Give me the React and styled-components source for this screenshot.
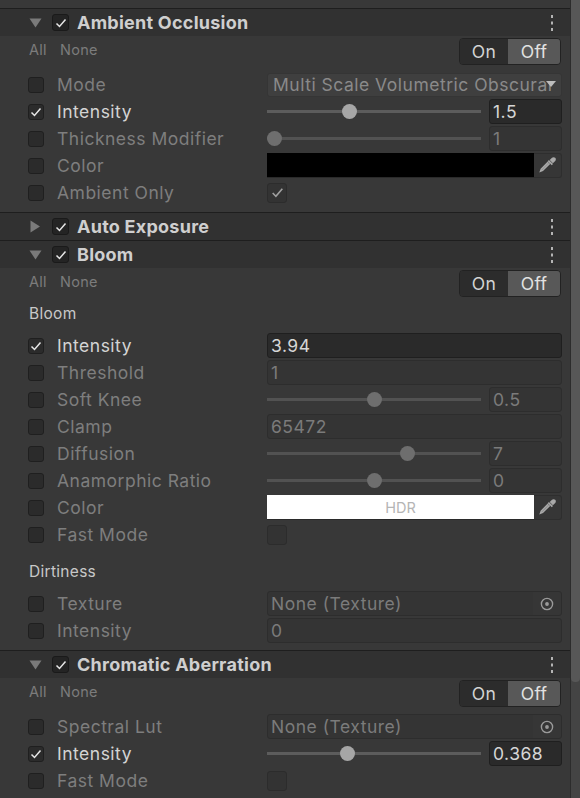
import React from "react";
import styled, { createGlobalStyle } from "styled-components";

const GlobalStyle = createGlobalStyle`
  body {
    margin: 0;
    background: #383838;
    font-family: Inter, "Noto Sans", sans-serif;
  }
`;

const Inspector = styled.div`
  display: flex;
  width: 580px;
  height: 798px;
  overflow: hidden;
  background: #383838;
`;

const Column = styled.div`
  flex: 1;
  min-width: 0;
`;

const TopStrip = styled.div`
  height: 8px;
`;

const Scrollbar = styled.div`
  width: 9px;
  border-left: 1px solid #2c2c2c;
  background: #444444;
`;

const Thumb = styled.div`
  height: 682px;
  background: #575757;
  border-radius: 0 0 4px 4px;
`;

const Header = styled.div`
  display: flex;
  align-items: center;
  height: 27px;
  border-top: 1px solid #1e1e1e;
  background: #313131;
  padding-left: 29px;
  padding-right: 16px;
`;

const Arrow = styled.svg`
  width: 13px;
  height: 13px;
  flex: none;
`;

const HeaderBox = styled.div`
  width: 15px;
  height: 15px;
  margin-left: 10px;
  margin-right: 8px;
  border: 1px solid #1a1a1a;
  border-radius: 3px;
  background: #242424;
  display: flex;
  align-items: center;
  justify-content: center;
`;

const Title = styled.span`
  font-size: 18px;
  font-weight: 700;
  color: #cfcfcf;
  letter-spacing: 0.25px;
`;

const Kebab = styled.svg`
  margin-left: auto;
  width: 4px;
  height: 16px;
`;

const Body = styled.div`
  padding: 3px 0 6px;
`;

const Toolbar = styled.div`
  display: flex;
  align-items: center;
  height: 25px;
  padding-left: 29px;
  padding-right: 9px;
  margin-bottom: 7px;
`;

const Link = styled.span`
  font-size: 14.5px;
  letter-spacing: 0.3px;
  color: #7c7c7c;
  margin-right: 13px;
  margin-bottom: 5px;
`;

const Segmented = styled.div`
  margin-left: auto;
  display: flex;
  height: 25px;
  border: 1px solid #222222;
  border-radius: 4px;
  overflow: hidden;
`;

const Segment = styled.div`
  display: flex;
  align-items: center;
  justify-content: center;
  width: ${(p) => p.$w}px;
  font-size: 17.5px;
  letter-spacing: 0.3px;
  color: ${(p) => (p.$active ? "#e2e2e2" : "#d4d4d4")};
  background: ${(p) => (p.$active ? "#585858" : "#2c2c2c")};
`;

const SectionLabel = styled.div`
  height: 22px;
  line-height: 22px;
  margin: ${(p) => (p.$spaced ? "13px" : "7px")} 0 7px;
  padding-left: 29px;
  font-size: 15.5px;
  letter-spacing: 0.3px;
  color: #c8c8c8;
`;

const Row = styled.div`
  display: grid;
  grid-template-columns: 267px minmax(0, 1fr);
  align-items: center;
  height: 27px;
  padding-right: 8px;
`;

const LabelCell = styled.div`
  display: flex;
  align-items: center;
  padding-left: 28px;
  gap: 13px;
  overflow: hidden;
  white-space: nowrap;
`;

const Box = styled.div`
  width: ${(p) => p.$size}px;
  height: ${(p) => p.$size}px;
  flex: none;
  box-sizing: border-box;
  border: 1px solid ${(p) => (p.$dim ? "#2c2c2c" : "#1f1f1f")};
  border-radius: 3px;
  background: ${(p) => (p.$dim ? "#333333" : "#2b2b2b")};
  display: flex;
  align-items: center;
  justify-content: center;
`;

const Label = styled.span`
  font-size: 17.5px;
  letter-spacing: 0.5px;
  color: ${(p) => (p.$on ? "#d4d4d4" : "#7e7e7e")};
`;

const FieldBox = styled.div`
  box-sizing: border-box;
  height: 25px;
  display: flex;
  align-items: center;
  border: 1px solid ${(p) => (p.$on ? "#1f1f1f" : "#2d2d2d")};
  border-radius: 3px;
  background: ${(p) => (p.$on ? "#2a2a2a" : "#343434")};
  color: ${(p) => (p.$on ? "#d6d6d6" : "#7b7b7b")};
  font-size: 17.5px;
  letter-spacing: 0.5px;
  padding-left: 3px;
  overflow: hidden;
  white-space: nowrap;
`;

const Dropdown = styled.div`
  box-sizing: border-box;
  min-width: 0;
  height: 24px;
  display: flex;
  align-items: center;
  border: 1px solid #353535;
  border-radius: 3px;
  background: #3f3f3f;
  color: #8a8a8a;
  font-size: 17.5px;
  letter-spacing: 0.5px;
  padding-left: 5px;
  padding-right: 5px;
  white-space: nowrap;
`;

const DropText = styled.span`
  flex: 1;
  min-width: 0;
  overflow: hidden;
`;

const DropArrow = styled.svg`
  flex: none;
  width: 10px;
  height: 7px;
  margin-left: -5px;
`;

const SliderWrap = styled.div`
  display: grid;
  grid-template-columns: 1fr 73px;
  gap: 8px;
  align-items: center;
`;

const Track = styled.div`
  position: relative;
  height: 3px;
  background: ${(p) => (p.$on ? "#5c5c5c" : "#525252")};
`;

const Knob = styled.div`
  position: absolute;
  top: -6px;
  width: 15px;
  height: 15px;
  margin-left: -7.5px;
  border-radius: 50%;
  background: ${(p) => (p.$on ? "#a6a6a6" : "#6e6e6e")};
`;

const ColorWrap = styled.div`
  display: flex;
  height: 25px;
`;

const Swatch = styled.div`
  flex: 1;
  display: flex;
  align-items: center;
  justify-content: center;
  background: ${(p) => p.$color};
  font-size: 14.5px;
  color: #b5b5b5;
  border-bottom: 1px solid #2a2a2a;
`;

const SideButton = styled.div`
  width: 28px;
  flex: none;
  box-sizing: border-box;
  display: flex;
  align-items: center;
  justify-content: center;
  background: #363636;
  border: 1px solid #2e2e2e;
  border-left: none;
  border-radius: 0 3px 3px 0;
`;

const ObjectField = styled(FieldBox)`
  padding-right: 0;
`;

const ObjectText = styled.span`
  flex: 1;
`;

const PickerSlot = styled.div`
  width: 28px;
  height: 100%;
  display: flex;
  align-items: center;
  justify-content: center;
  background: #363636;
`;

const Check = ({ color = "#e6e6e6", size = 14 }) => (
  <svg width={size} height={size} viewBox="0 0 14 14">
    <polyline points="2.5,7.5 5.5,10.5 11.5,3.5" fill="none" stroke={color} strokeWidth="1.5" />
  </svg>
);

const Eyedropper = () => (
  <svg width="19" height="19" viewBox="0 0 19 19">
    <path d="M14 1.8c.9-.9 2.3-.9 3.2 0s.9 2.3 0 3.2l-2.3 2.3-3.2-3.2z" fill="#a8a8a8" />
    <path d="M10.3 4.6l4.1 4.1" stroke="#a8a8a8" strokeWidth="1.8" />
    <path d="M11.6 7.4L4.6 14.4l-2 .7.7-2 7-7" fill="none" stroke="#a8a8a8" strokeWidth="1.6" />
  </svg>
);

const Picker = () => (
  <svg width="14" height="14" viewBox="0 0 14 14">
    <circle cx="7" cy="7" r="5.6" fill="none" stroke="#9a9a9a" strokeWidth="1.4" />
    <circle cx="7" cy="7" r="1.9" fill="#9a9a9a" />
  </svg>
);

const Field = ({ f, on }) => {
  switch (f.type) {
    case "dropdown":
      return (
        <Dropdown>
          <DropText>{f.text}</DropText>
          <DropArrow viewBox="0 0 10 7">
            <polygon points="0,0 10,0 5,6" fill="#bdbdbd" />
          </DropArrow>
        </Dropdown>
      );
    case "slider":
      return (
        <SliderWrap>
          <Track $on={on}>
            <Knob $on={on} style={{ left: `${f.pct}%` }} />
          </Track>
          <FieldBox $on={on}>{f.value}</FieldBox>
        </SliderWrap>
      );
    case "number":
      return <FieldBox $on={on}>{f.value}</FieldBox>;
    case "color":
      return (
        <ColorWrap>
          <Swatch $color={f.color}>{f.hdr ? "HDR" : ""}</Swatch>
          <SideButton>
            <Eyedropper />
          </SideButton>
        </ColorWrap>
      );
    case "toggle":
      return (
        <Box $size={20} $dim>
          {f.checked && <Check color="#a0a0a0" size={15} />}
        </Box>
      );
    case "object":
      return (
        <ObjectField $on={on}>
          <ObjectText>{f.text}</ObjectText>
          <PickerSlot>
            <Picker />
          </PickerSlot>
        </ObjectField>
      );
    default:
      return null;
  }
};

const PropRow = ({ label, on, field }) => (
  <Row>
    <LabelCell>
      <Box $size={16}>{on && <Check />}</Box>
      <Label $on={on}>{label}</Label>
    </LabelCell>
    <Field f={field} on={on} />
  </Row>
);

// knob centre across the usable track (7.5px radius inside 214px)
const pct = (v, min, max) => 3.5 + ((v - min) / (max - min)) * 93;

const sections = [
  {
    title: "Ambient Occlusion",
    open: true,
    groups: [
      {
        rows: [
          { label: "Mode", field: { type: "dropdown", text: "Multi Scale Volumetric Obscurance" } },
          { label: "Intensity", on: true, field: { type: "slider", value: "1.5", pct: pct(1.5, 0, 4) } },
          { label: "Thickness Modifier", field: { type: "slider", value: "1", pct: pct(1, 1, 10) } },
          { label: "Color", field: { type: "color", color: "#000000" } },
          { label: "Ambient Only", field: { type: "toggle", checked: true } },
        ],
      },
    ],
  },
  { title: "Auto Exposure", open: false },
  {
    title: "Bloom",
    open: true,
    groups: [
      {
        label: "Bloom",
        rows: [
          { label: "Intensity", on: true, field: { type: "number", value: "3.94" } },
          { label: "Threshold", field: { type: "number", value: "1" } },
          { label: "Soft Knee", field: { type: "slider", value: "0.5", pct: pct(0.5, 0, 1) } },
          { label: "Clamp", field: { type: "number", value: "65472" } },
          { label: "Diffusion", field: { type: "slider", value: "7", pct: pct(7, 1, 10) } },
          { label: "Anamorphic Ratio", field: { type: "slider", value: "0", pct: pct(0, -1, 1) } },
          { label: "Color", field: { type: "color", color: "#ffffff", hdr: true } },
          { label: "Fast Mode", field: { type: "toggle" } },
        ],
      },
      {
        label: "Dirtiness",
        rows: [
          { label: "Texture", field: { type: "object", text: "None (Texture)" } },
          { label: "Intensity", field: { type: "number", value: "0" } },
        ],
      },
    ],
  },
  {
    title: "Chromatic Aberration",
    open: true,
    groups: [
      {
        rows: [
          { label: "Spectral Lut", field: { type: "object", text: "None (Texture)" } },
          { label: "Intensity", on: true, field: { type: "slider", value: "0.368", pct: pct(0.368, 0, 1) } },
          { label: "Fast Mode", field: { type: "toggle" } },
        ],
      },
    ],
  },
];

const Section = ({ title, open, groups }) => (
  <>
    <Header>
      <Arrow viewBox="0 0 13 13">
        {open ? (
          <polygon points="0.5,2.5 12.5,2.5 6.5,11.5" fill="#7a7a7a" />
        ) : (
          <polygon points="1.5,0.5 11,6.5 1.5,12.5" fill="#7a7a7a" />
        )}
      </Arrow>
      <HeaderBox>
        <Check />
      </HeaderBox>
      <Title>{title}</Title>
      <Kebab viewBox="0 0 4 16">
        <rect x="1" y="0" width="2" height="3" fill="#b4b4b4" />
        <rect x="1" y="6.5" width="2" height="3" fill="#b4b4b4" />
        <rect x="1" y="13" width="2" height="3" fill="#b4b4b4" />
      </Kebab>
    </Header>
    {open && (
      <Body>
        <Toolbar>
          <Link>All</Link>
          <Link>None</Link>
          <Segmented>
            <Segment $w={48}>On</Segment>
            <Segment $w={52} $active>
              Off
            </Segment>
          </Segmented>
        </Toolbar>
        {groups.map((g, i) => (
          <div key={i}>
            {g.label && <SectionLabel $spaced={i > 0}>{g.label}</SectionLabel>}
            {g.rows.map((r, j) => (
              <PropRow key={j} {...r} />
            ))}
          </div>
        ))}
      </Body>
    )}
  </>
);

const App = () => (
  <>
    <GlobalStyle />
    <Inspector>
      <Column>
        <TopStrip />
        {sections.map((s) => (
          <Section key={s.title} {...s} />
        ))}
      </Column>
      <Scrollbar>
        <Thumb />
      </Scrollbar>
    </Inspector>
  </>
);

export default App;
